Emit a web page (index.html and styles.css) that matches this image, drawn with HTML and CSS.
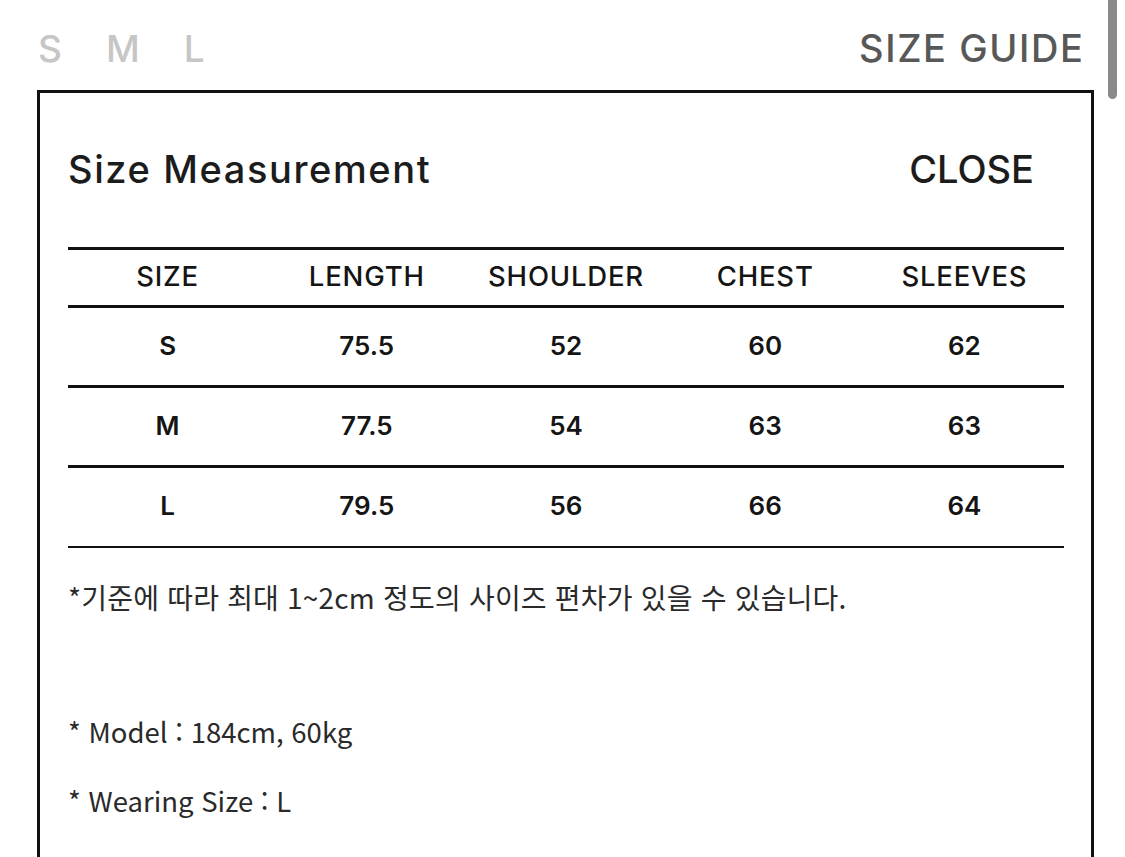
FILE: index.html
```html
<!DOCTYPE html>
<html lang="ko">
<head>
<meta charset="utf-8">
<title>Size Guide</title>
<link rel="stylesheet" href="styles.css">
</head>
<body>
<div class="page">
  <header class="topbar">
    <nav class="sizes">
      <span class="size-opt">S</span>
      <span class="size-opt">M</span>
      <span class="size-opt">L</span>
    </nav>
    <span class="guide">SIZE GUIDE</span>
  </header>
  <section class="modal">
    <div class="modal-head">
      <h2 class="title">Size Measurement</h2>
      <span class="close">CLOSE</span>
    </div>
    <div class="table">
      <div class="row head">
        <span>SIZE</span><span>LENGTH</span><span>SHOULDER</span><span>CHEST</span><span>SLEEVES</span>
      </div>
      <div class="row">
        <span>S</span><span>75.5</span><span>52</span><span>60</span><span>62</span>
      </div>
      <div class="row">
        <span>M</span><span>77.5</span><span>54</span><span>63</span><span>63</span>
      </div>
      <div class="row last">
        <span>L</span><span>79.5</span><span>56</span><span>66</span><span>64</span>
      </div>
    </div>
    <p class="note">*기준에 따라 최대 1~2cm 정도의 사이즈 편차가 있을 수 있습니다.</p>
    <p class="info first">* Model : 184cm, 60kg</p>
    <p class="info">* Wearing Size : L</p>
  </section>
  <div class="scrollbar"></div>
</div>
</body>
</html>
```

FILE: styles.css
```css
html, body {
  margin: 0;
  padding: 0;
  background: #fff;
  overflow: hidden;
}
.page {
  position: relative;
  width: 1125px;
  height: 857px;
  overflow: hidden;
  font-family: Inter, "Noto Sans", sans-serif;
}
.topbar {
  display: flex;
  justify-content: space-between;
  align-items: center;
  height: 90px;
  padding: 6px 42px 0 38px;
  box-sizing: border-box;
}
.sizes {
  display: flex;
  gap: 44px;
}
.size-opt {
  font-size: 37px;
  font-weight: 500;
  color: #c6c6c6;
  line-height: 1;
}
.guide {
  font-size: 38px;
  font-weight: 500;
  color: #585858;
  letter-spacing: 1.6px;
  line-height: 1;
  margin-right: -1.6px;
}
.scrollbar {
  position: absolute;
  top: -6px;
  left: 1108px;
  width: 9px;
  height: 105px;
  border-radius: 5px;
  background: #8a8a8a;
}
.modal {
  margin-left: 37px;
  width: 1057px;
  height: 900px;
  box-sizing: border-box;
  border: 3px solid #111;
  padding: 52px 28px 0 28px;
}
.modal-head {
  display: flex;
  justify-content: space-between;
  align-items: center;
  height: 48px;
  padding-right: 29px;
}
.title {
  margin: 0;
  font-size: 38px;
  font-weight: 500;
  color: #1c1c1c;
  letter-spacing: 1.6px;
}
.close {
  font-size: 38px;
  font-weight: 500;
  color: #1c1c1c;
  letter-spacing: 0;
}
.table {
  margin-top: 54px;
  width: 996px;
  border-top: 3px solid #111;
}
.row {
  display: grid;
  grid-template-columns: repeat(5, 1fr);
  height: 80px;
  box-sizing: border-box;
  padding-bottom: 3px;
  align-items: center;
  border-bottom: 3px solid #111;
  font-size: 26px;
  font-weight: 600;
  color: #151515;
  text-align: center;
}
.row.head {
  height: 58px;
  font-size: 27.5px;
  font-weight: 500;
  letter-spacing: 0.8px;
}
.row.last {
  border-bottom-width: 2.5px;
}
.note {
  margin: 29px 0 0 0;
  font-family: "Noto Sans CJK KR", "Noto Sans", sans-serif;
  font-size: 28px;
  font-weight: 400;
  color: #2a2a2a;
  line-height: 40px;
  letter-spacing: 0.2px;
}
.info {
  margin: 29px 0 0 0;
  font-family: "Noto Sans CJK KR", "Noto Sans", sans-serif;
  font-size: 27.5px;
  font-weight: 400;
  color: #2a2a2a;
  line-height: 40px;
}
.info.first {
  margin-top: 94px;
}
```
